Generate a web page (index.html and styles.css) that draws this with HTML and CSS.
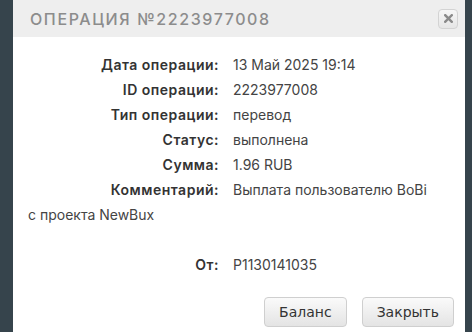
FILE: index.html
```html
<!DOCTYPE html>
<html lang="ru">
<head>
<meta charset="utf-8">
<link rel="stylesheet" href="styles.css">
</head>
<body>
<div class="dialog">
  <div class="titlebar">
    <span class="title">ОПЕРАЦИЯ №2223977008</span>
    <button class="close" aria-label="close">
      <svg width="9" height="9" viewBox="0 0 9 9"><path d="M1.2 1.2 L7.8 7.8 M7.8 1.2 L1.2 7.8" stroke="#8a8a8a" stroke-width="2.4" stroke-linecap="square"/></svg>
    </button>
  </div>
  <div class="content">
    <div class="row"><span class="label">Дата операции:</span>13 Май 2025 19:14</div>
    <div class="row"><span class="label">ID операции:</span>2223977008</div>
    <div class="row"><span class="label">Тип операции:</span>перевод</div>
    <div class="row"><span class="label">Статус:</span>выполнена</div>
    <div class="row"><span class="label">Сумма:</span>1.96 RUB</div>
    <div class="row"><span class="label">Комментарий:</span>Выплата пользователю BoBi с проекта NewBux</div>
    <div class="row empty"></div>
    <div class="row"><span class="label">От:</span>P1130141035</div>
  </div>
  <div class="footer">
    <button class="btn">Баланс</button>
    <button class="btn">Закрыть</button>
  </div>
</div>
</body>
</html>
```
FILE: styles.css
```css
html, body {
  margin: 0;
  padding: 0;
  background: #36444c;
  height: 100%;
  overflow: hidden;
}
.dialog {
  margin-left: 13px;
  width: 452px;
  background: #ffffff;
  height: 340px;
}
.titlebar {
  height: 37px;
  background: #eeeeee;
  display: flex;
  align-items: center;
  justify-content: space-between;
  padding: 0 7px 0 17px;
  box-sizing: border-box;
}
.title {
  font-family: "Inter", "Noto Sans", sans-serif;
  font-size: 16px;
  letter-spacing: 1.6px;
  color: #8c8c8c;
  font-weight: 500;
}
.close {
  width: 20px;
  height: 20px;
  padding: 0;
  border: 1px solid #d3d3d3;
  border-radius: 4px;
  background: linear-gradient(#f6f6f6, #e6e6e6);
  display: flex;
  align-items: center;
  justify-content: center;
}
.content {
  padding: 15px 33px 0 15px;
  font-family: "Inter", "Noto Sans", sans-serif;
  font-size: 14px;
  color: #444;
}
.row {
  line-height: 25px;
}
.empty {
  height: 25px;
}
.label {
  display: inline-block;
  width: 191px;
  padding-right: 14px;
  text-align: right;
  font-weight: 600;
  letter-spacing: 0.5px;
  color: #333;
}
.footer {
  display: flex;
  justify-content: flex-end;
  gap: 15px;
  padding: 20px 11px 0 0;
}
.btn {
  height: 30px;
  padding: 0 14px;
  font-family: "DejaVu Sans", "Open Sans", sans-serif;
  font-size: 14px;
  color: #333;
  border: 1px solid #cfcfcf;
  border-radius: 4px;
  background: linear-gradient(#fafafa, #e4e4e4);
}
```
